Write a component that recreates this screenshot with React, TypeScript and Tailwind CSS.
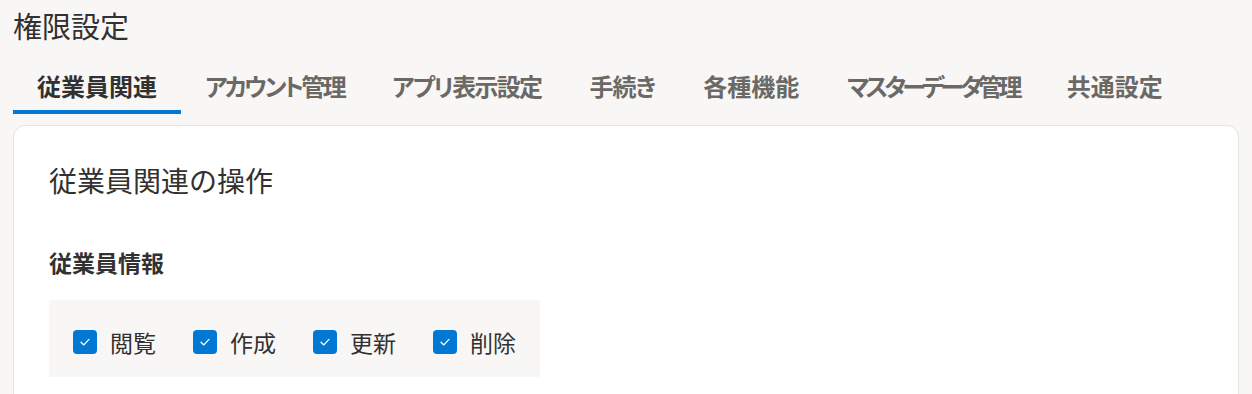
const tabs = [
  { label: "従業員関連", tracking: "tracking-normal" },
  { label: "アカウント管理", tracking: "tracking-[-2.6px]" },
  { label: "アプリ表示設定", tracking: "tracking-[-1.7px]" },
  { label: "手続き", tracking: "tracking-[-1px]" },
  { label: "各種機能", tracking: "tracking-normal" },
  { label: "マスターデータ管理", tracking: "tracking-[-3.8px]" },
  { label: "共通設定", tracking: "tracking-normal" },
];

const permissions = ["閲覧", "作成", "更新", "削除"];

function CheckIcon() {
  return (
    <svg viewBox="0 0 12 12" className="h-[14px] w-[14px]" fill="none">
      <polyline points="2.6,6.2 5,8.5 9.4,3.8" stroke="white" strokeWidth="1.1" strokeLinecap="round" strokeLinejoin="round" />
    </svg>
  );
}

export default function App() {
  return (
    <main className="min-h-screen bg-[#f8f7f6] px-[13px] text-[#323130] [font-family:'Noto_Sans_CJK_JP','Noto_Sans',sans-serif]">
      <h1 className="pt-[5px] text-[29px] leading-[40px] font-normal">権限設定</h1>

      <nav className="mt-[25px] flex [font-feature-settings:'palt']">
        {tabs.map((tab, i) => (
          <div key={tab.label} className="flex shrink-0 flex-col">
            <span className={`whitespace-nowrap px-[24px] text-[24px] leading-[32px] font-bold ${tab.tracking} ${i === 0 ? "text-[#323130]" : "text-[#6b6965]"}`}>{tab.label}</span>
            <span className={`mt-[8px] h-[4px] ${i === 0 ? "bg-[#0078d4]" : "bg-transparent"}`} />
          </div>
        ))}
      </nav>

      <section className="mt-[11px] h-[300px] rounded-[12px] border border-[#e6e4e1] bg-white px-[35px] pt-[36px]">
        <h2 className="text-[28px] leading-[36px] font-normal">従業員関連の操作</h2>
        <h3 className="mt-[49px] text-[23px] leading-[30px] font-bold">従業員情報</h3>
        <div className="mt-[23px] flex w-fit gap-x-[37px] bg-[#f8f7f6] px-[24px] pt-[30px] pb-[23px]">
          {permissions.map((p) => (
            <label key={p} className="flex items-center gap-x-[13px]">
              <span className="flex h-[24px] w-[24px] items-center justify-center rounded-[4px] bg-[#0078d4]">
                <CheckIcon />
              </span>
              <span className="text-[23px] leading-[24px]">{p}</span>
            </label>
          ))}
        </div>
      </section>
    </main>
  );
}
